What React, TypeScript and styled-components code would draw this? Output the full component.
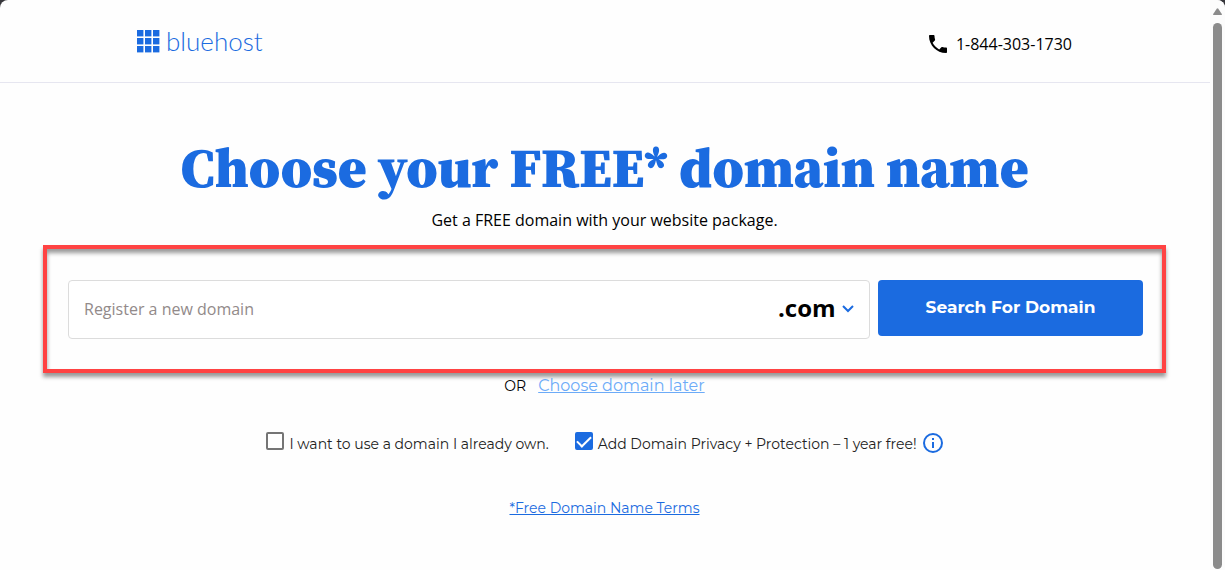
import React, { useState } from "react";
import styled, { createGlobalStyle } from "styled-components";

const blue = "#1b6be0";
const body = '"Open Sans", "Noto Sans", sans-serif';
const round = 'Montserrat, Inter, "Open Sans", sans-serif';

const GlobalStyle = createGlobalStyle`
  * { box-sizing: border-box; }
  body { margin: 0; background: #37373c; font-family: ${body}; font-size: 16px; color: #000; }
`;

const Window = styled.div`
  display: flex;
  min-height: 100vh;
  background: #fefefe;
  border-radius: 8px 8px 0 0;
  overflow: hidden;
`;

const Page = styled.div`
  flex: 1;
  min-width: 0;
  display: flex;
  flex-direction: column;
`;

const Header = styled.header`
  display: flex;
  align-items: center;
  justify-content: space-between;
  height: 83px;
  padding: 0 138px 0 137px;
  border-bottom: 1px solid #e6e6f0;
`;

const Logo = styled.a`
  display: flex;
  align-items: center;
  gap: 6px;
  color: ${blue};
  text-decoration: none;
  font-family: Lato, ${body};
  font-size: 26px;
  font-weight: 300;
  line-height: 32px;
`;

const Phone = styled.a`
  display: flex;
  align-items: center;
  gap: 6px;
  padding-top: 6px;
  color: #000;
  text-decoration: none;
  line-height: 24px;
`;

const Main = styled.main`
  display: flex;
  flex-direction: column;
  align-items: stretch;
  padding: 49px 44px 0 43px;
  text-align: center;
`;

const Title = styled.h1`
  margin: 0 0 4px;
  font-family: "Source Serif 4", "Liberation Serif", serif;
  font-size: 55px;
  line-height: 72px;
  font-weight: 900;
  color: ${blue};
`;

const Subtitle = styled.p`
  margin: 0 0 13px;
  line-height: 24px;
`;

const SearchForm = styled.form`
  display: flex;
  align-items: flex-start;
  gap: 8px;
  padding: 31px 19px 30px 21px;
  border: 4px solid #ff4343;
  box-shadow: 0 4px 4px rgba(0, 0, 0, 0.4), inset 0 4px 4px rgba(0, 0, 0, 0.4);
`;

const Field = styled.div`
  flex: 1;
  min-width: 0;
  display: flex;
  align-items: center;
  height: 59px;
  padding-bottom: 2px;
  border: 1px solid #dcdcdc;
  border-radius: 4px;
  background: #fff;
`;

const DomainInput = styled.input`
  flex: 1;
  min-width: 0;
  height: 100%;
  padding: 0 15px;
  border: 0;
  outline: 0;
  background: transparent;
  font: 16px ${body};
  &::placeholder { color: #928a8a; opacity: 1; }
`;

const SuffixPicker = styled.label`
  display: flex;
  align-items: center;
  gap: 6px;
  padding-right: 15px;
`;

const SuffixSelect = styled.select`
  appearance: none;
  border: 0;
  padding: 0 0 2px;
  outline: 0;
  background: transparent;
  color: #000;
  font: bold 24px ${body};
`;

const SearchButton = styled.button`
  width: 265px;
  height: 56px;
  padding: 0 0 2px;
  border: 0;
  border-radius: 4px;
  background: ${blue};
  color: #fff;
  font: bold 17px ${round};
`;

const Alternative = styled.p`
  display: flex;
  justify-content: center;
  align-items: baseline;
  gap: 12px;
  margin: 1px 0 0;
  font-family: ${round};
  font-size: 14px;
  line-height: 24px;
`;

const LaterLink = styled.a`
  font-size: 16px;
  color: #6cabf8;
`;

const Options = styled.div`
  display: flex;
  justify-content: center;
  gap: 26px;
  margin: 34px 0 0 1px;
`;

const Option = styled.div`
  display: flex;
  align-items: center;
  gap: 5px;
  font-family: ${round};
  font-size: 14px;
  line-height: 24px;
`;

const OptionLabel = styled.label`
  display: flex;
  align-items: center;
  gap: 5px;
  color: #222;
`;

const Tick = styled.input`
  appearance: none;
  width: 18px;
  height: 18px;
  margin: 0 0 6px;
  border: 2px solid #757575;
  border-radius: 2px;
  background: #fff;
  &:checked {
    border-color: ${blue};
    background: ${blue};
  }
  &:checked::after {
    content: "";
    display: block;
    width: 6px;
    height: 12px;
    margin: 0 auto;
    border: solid #fff;
    border-width: 0 2px 2px 0;
    transform: translateY(-1px) rotate(45deg);
  }
`;

const InfoButton = styled.button`
  display: flex;
  padding: 0 0 2px;
  border: 0;
  background: none;
  color: ${blue};
`;

const Terms = styled.a`
  align-self: center;
  margin-top: 40px;
  font-family: ${round};
  font-size: 14px;
  line-height: 24px;
  color: ${blue};
`;

const ScrollTrack = styled.div`
  display: flex;
  flex-direction: column;
  align-items: center;
  gap: 7px;
  width: 15px;
  padding: 8px 0 1px;
  background: #fcfcfc;
`;

const ScrollThumb = styled.div`
  flex: 1;
  width: 9px;
  border-radius: 5px;
  background: #8b8b8b;
`;

const squares = [0, 8, 16];

export default function App() {
  const [own, setOwn] = useState(false);
  const [privacy, setPrivacy] = useState(true);
  return (
    <>
      <GlobalStyle />
      <Window>
        <Page>
          <Header>
            <Logo href="#">
              <svg width="23" height="23" viewBox="0 0 23 23" fill="currentColor" aria-hidden="true">
                {squares.map((y) => squares.map((x) => <rect key={`${x}-${y}`} x={x} y={y} width="6.4" height="6.4" />))}
              </svg>
              bluehost
            </Logo>
            <Phone href="tel:18443031730">
              <svg width="24" height="24" viewBox="0 0 24 24" aria-hidden="true">
                <path d="M6.62 10.79c1.44 2.83 3.76 5.14 6.59 6.59l2.2-2.2c.27-.27.67-.36 1.02-.24 1.12.37 2.33.57 3.57.57.55 0 1 .45 1 1V20c0 .55-.45 1-1 1-9.39 0-17-7.61-17-17 0-.55.45-1 1-1h3.5c.55 0 1 .45 1 1 0 1.25.2 2.45.57 3.57.11.35.03.74-.25 1.02l-2.2 2.2z" />
              </svg>
              1-844-303-1730
            </Phone>
          </Header>
          <Main>
            <Title>Choose your FREE* domain name</Title>
            <Subtitle>Get a FREE domain with your website package.</Subtitle>
            <SearchForm onSubmit={(e) => e.preventDefault()}>
              <Field>
                <DomainInput aria-label="Register a new domain" placeholder="Register a new domain" />
                <SuffixPicker>
                  <SuffixSelect aria-label="Domain extension">
                    <option>.com</option>
                    <option>.net</option>
                    <option>.org</option>
                  </SuffixSelect>
                  <svg width="12" height="8" viewBox="0 0 12 8" fill="none" stroke={blue} strokeWidth="2" aria-hidden="true">
                    <path d="M1 1l5 5 5-5" />
                  </svg>
                </SuffixPicker>
              </Field>
              <SearchButton type="submit">Search For Domain</SearchButton>
            </SearchForm>
            <Alternative>
              OR <LaterLink href="#later">Choose domain later</LaterLink>
            </Alternative>
            <Options>
              <Option>
                <OptionLabel>
                  <Tick type="checkbox" checked={own} onChange={(e) => setOwn(e.target.checked)} />
                  I want to use a domain I already own.
                </OptionLabel>
              </Option>
              <Option>
                <OptionLabel>
                  <Tick type="checkbox" checked={privacy} onChange={(e) => setPrivacy(e.target.checked)} />
                  Add Domain Privacy + Protection – 1 year free!
                </OptionLabel>
                <InfoButton type="button" aria-label="About domain privacy">
                  <svg width="22" height="22" viewBox="0 0 22 22" fill="currentColor" aria-hidden="true">
                    <circle cx="11" cy="11" r="9" fill="none" stroke="currentColor" strokeWidth="2" />
                    <rect x="10" y="6" width="2" height="2" />
                    <rect x="10" y="10" width="2" height="6" />
                  </svg>
                </InfoButton>
              </Option>
            </Options>
            <Terms href="#terms">*Free Domain Name Terms</Terms>
          </Main>
        </Page>
        <ScrollTrack aria-hidden="true">
          <svg width="9" height="8" viewBox="0 0 9 8">
            <path d="M3.7 .8Q4.5-.3 5.3.8L8.8 6Q9.2 7 8 7H1Q-.2 7 .2 6Z" fill="#8b8b8b" />
          </svg>
          <ScrollThumb />
        </ScrollTrack>
      </Window>
    </>
  );
}
